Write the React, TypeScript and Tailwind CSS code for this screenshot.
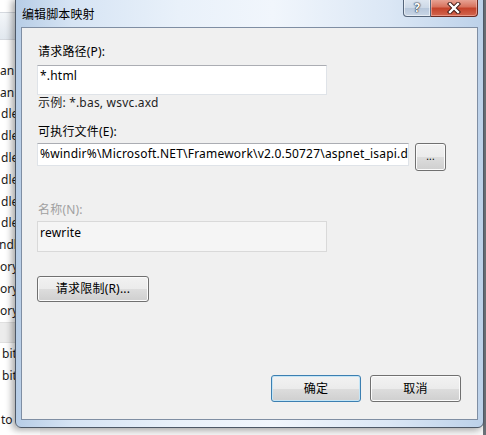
import React from "react";

const FONT = "font-['Noto_Sans','Noto_Sans_CJK_SC',sans-serif]";

function WinButton({
  children,
  className = "",
  focused = false,
}: {
  children: React.ReactNode;
  className?: string;
  focused?: boolean;
}) {
  return (
    <div
      className={
        "flex items-center justify-center rounded-[3px] border text-[12px] leading-[16px] text-black " +
        (focused
          ? "border-[#3c7fb1] shadow-[inset_0_0_0_1px_#c4e5f6] bg-[linear-gradient(#f2f2f2_0%,#ebebeb_50%,#dddddd_50%,#cfcfcf_100%)] "
          : "border-[#707070] shadow-[inset_0_0_0_1px_#fbfbfb] bg-[linear-gradient(#f2f2f2_0%,#ebebeb_50%,#dddddd_50%,#cfcfcf_100%)] ") +
        className
      }
    >
      {children}
    </div>
  );
}

const bgRows: { t: string; cls?: string; band?: boolean }[] = [
  { t: "an" },
  { t: "an" },
  { t: "dle", cls: "ml-[1px]" },
  { t: "dle", cls: "ml-[1px]" },
  { t: "dle", cls: "ml-[1px]" },
  { t: "dle", cls: "ml-[1px]" },
  { t: "dle", cls: "ml-[1px]" },
  { t: "dle", cls: "ml-[1px]" },
  { t: "ndle", cls: "ml-[-1px]" },
  { t: "ory" },
  { t: "ory" },
  { t: "ory" },
  { t: "", band: true },
  { t: "bit", cls: "ml-[2px]" },
  { t: "bit", cls: "ml-[2px]" },
  { t: "" },
  { t: "to", cls: "ml-[1px]" },
];

export default function App() {
  return (
    <div className={"relative w-[486px] h-[435px] overflow-hidden bg-[#f7f7f7] " + FONT}>
      {/* background window (behind the dialog) */}
      <div className="absolute left-0 top-0 w-[40px] h-[435px] bg-white flex flex-col overflow-hidden">
        <div className="h-[12px] bg-white shrink-0" />
        <div className="h-[28px] shrink-0 border-t border-b border-[#d5d9df] bg-[linear-gradient(#f3f6f9,#e2e8ef)]" />
        <div className="h-[20px] shrink-0" />
        {bgRows.map((r, i) => (
          <div
            key={i}
            className={
              "h-[21.8px] shrink-0 flex items-center whitespace-nowrap text-[12px] text-[#1a1a1a] " +
              (r.band ? "bg-[#ececec] border-t border-b border-[#e0e0e0]" : "")
            }
          >
            <span className={r.cls || ""}>{r.t}</span>
          </div>
        ))}
      </div>
      {/* right-side strip behind */}
      <div className="absolute right-0 top-0 w-[3px] h-[435px] bg-[#6b7178]" />

      {/* dialog window */}
      <div className="absolute left-[15px] top-[-2px] w-[469px] h-[430px] rounded-b-[6px] border border-[#4d5866] shadow-[-3px_2px_7px_rgba(0,0,0,0.35)] bg-[linear-gradient(90deg,#b7cde6_0%,#d6e4f4_12%,#e9f1fa_35%,#f1f6fc_55%,#dbe7f5_80%,#bcd1e9_100%)] flex flex-col">
        {/* title bar */}
        <div className="h-[28px] shrink-0 pl-[6px] pt-[4px] flex items-center text-[12px] text-black tracking-[0.1px]">
          编辑脚本映射
        </div>
        {/* caption buttons */}
        <div className="absolute top-0 right-[5px] flex h-[18px]">
          <div className="w-[28px] h-[18px] rounded-bl-[4px] border border-t-0 border-[#55657a] shadow-[inset_0_0_0_1px_rgba(255,255,255,0.55)] bg-[linear-gradient(#dfe7f1_0%,#cdd9e7_50%,#b6c6da_51%,#c9d6e6_100%)] flex items-center justify-center">
            <span className="text-[12px] leading-[14px] font-bold text-white [text-shadow:0_0_1px_#2c3440,0_0_1px_#2c3440,0_0_2px_#2c3440]">
              ?
            </span>
          </div>
          <div className="w-[47px] h-[18px] rounded-br-[4px] border border-l-0 border-t-0 border-[#6b2a22] shadow-[inset_0_0_0_1px_rgba(255,200,190,0.5)] bg-[linear-gradient(#e9a99b_0%,#d8745f_45%,#c4432b_55%,#d2664f_100%)] flex items-center justify-center">
            <svg width="14" height="12" viewBox="0 0 14 12">
              <path d="M3 2 L11 10 M11 2 L3 10" stroke="#3a1410" strokeWidth="4.2" strokeLinecap="square" />
              <path d="M3 2 L11 10 M11 2 L3 10" stroke="#ffffff" strokeWidth="2.4" strokeLinecap="square" />
            </svg>
          </div>
        </div>

        {/* client area */}
        <div className="mx-[5px] border border-[#7f8ea3] bg-[#f0f0f0] h-[393px] flex flex-col pl-[15px] text-[12px] leading-[16px] text-black tracking-[0.2px]">
          <div className="mt-[16px] h-[16px] pl-[1px]">请求路径(P):</div>
          <div className="mt-[5px] w-[290px] h-[30px] bg-white border border-[#dfe3e8] border-t-[#abadb3] pl-[2px] pt-[2px] whitespace-nowrap overflow-hidden">
            *.html
          </div>
          <div className="h-[16px] pl-[1px] text-[#1e1e1e]">示例: *.bas, wsvc.axd</div>

          <div className="mt-[13px] h-[16px] pl-[1px]">可执行文件(E):</div>
          <div className="mt-[3px] flex items-start gap-[6px]">
            <div className="w-[372px] h-[23px] bg-white border border-[#dfe3e8] border-t-[#abadb3] pl-[2px] pt-[2px] whitespace-nowrap overflow-hidden">
              %windir%\Microsoft.NET\Framework\v2.0.50727\aspnet_isapi.d
            </div>
            <WinButton className="w-[31px] h-[28px]">
              <span className="text-[10px] leading-none -mt-[2px]">...</span>
            </WinButton>
          </div>

          <div className="mt-[31px] h-[16px] pl-[1px] text-[#a0a0a0]">名称(N):</div>
          <div className="mt-[3px] w-[290px] h-[31px] bg-[#f5f5f5] border border-[#d9d9d9] pl-[2px] pt-[3px]">
            rewrite
          </div>

          <WinButton className="mt-[24px] w-[112px] h-[26px]">请求限制(R)...</WinButton>

          <div className="mt-[73px] flex gap-[9px] pl-[234px]">
            <WinButton focused className="w-[90px] h-[27px]">
              确定
            </WinButton>
            <WinButton className="w-[91px] h-[27px]">取消</WinButton>
          </div>
        </div>
      </div>
    </div>
  );
}
